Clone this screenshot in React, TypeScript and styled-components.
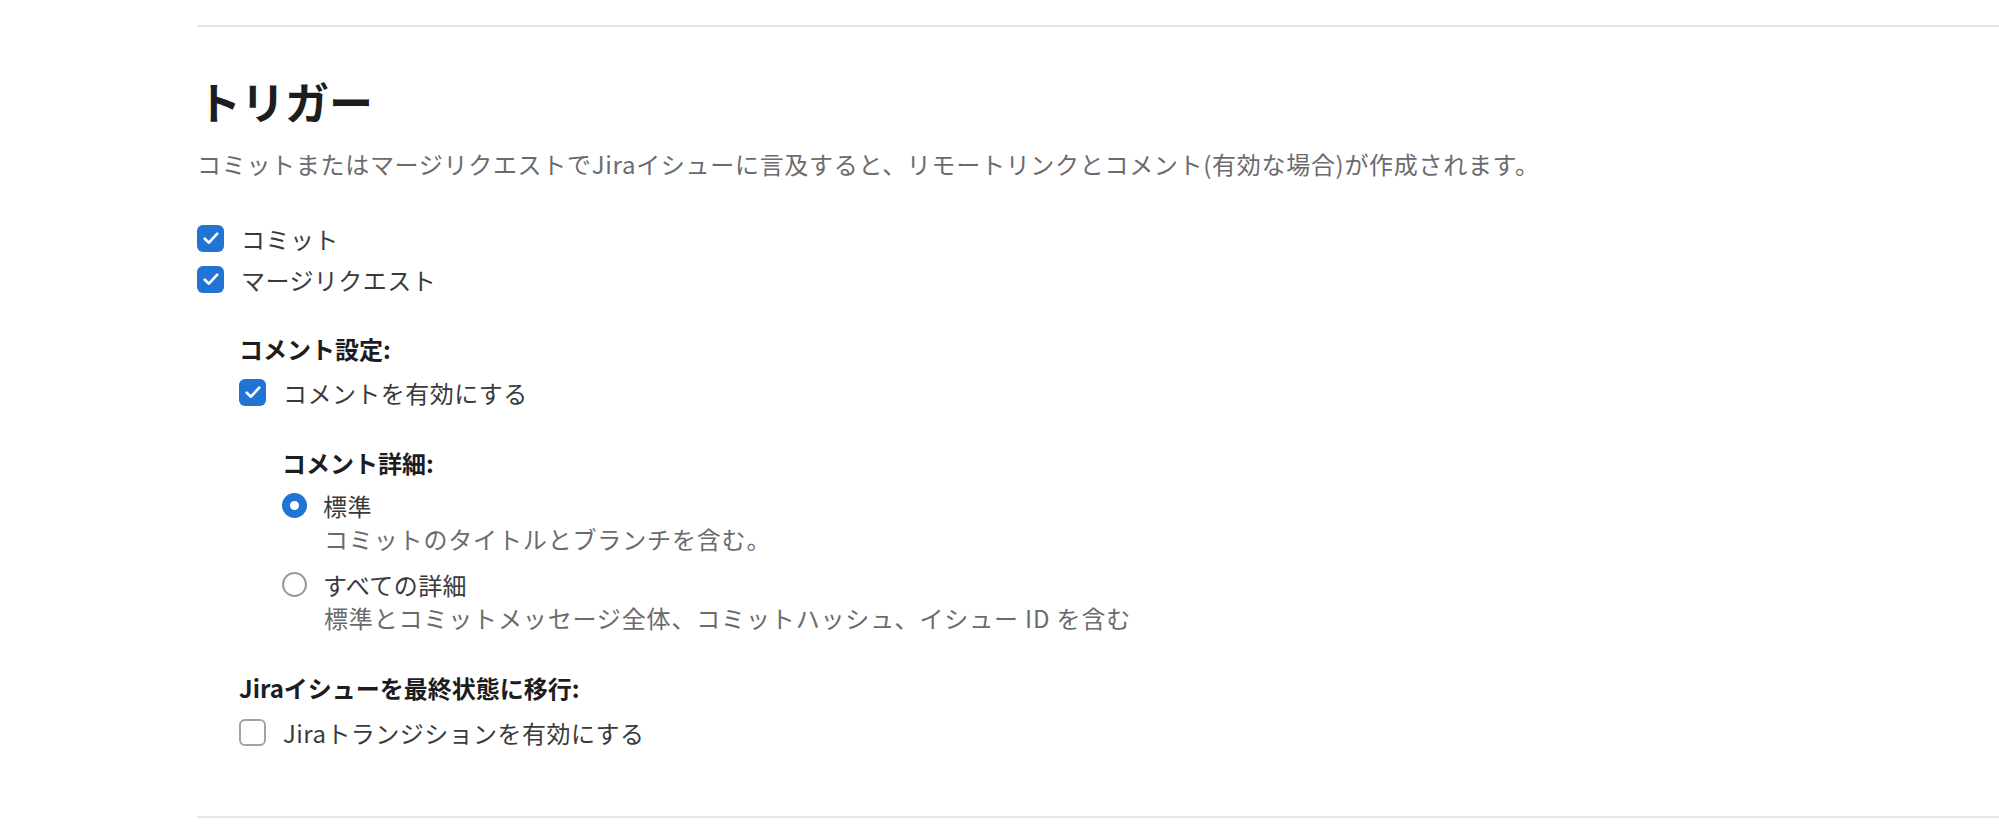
import React from 'react';
import styled, { createGlobalStyle } from 'styled-components';

const Global = createGlobalStyle`
  html, body { margin: 0; padding: 0; background: #ffffff; }
  body {
    font-family: "Noto Sans CJK JP", "Noto Sans", "Liberation Sans", sans-serif;
    -webkit-font-smoothing: antialiased;
  }
`;

const BLUE = '#2174d4';

const Page = styled.div`
  padding: 25px 0 0 197px;
`;

const Section = styled.section`
  display: flex;
  flex-direction: column;
  border-top: 2px solid #e6e6e6;
  border-bottom: 2px solid #e6e6e6;
  padding: 49px 0 67px;
`;

const Title = styled.h2`
  margin: 0;
  font-size: 44px;
  line-height: 50px;
  font-weight: 700;
  color: #1d1d1f;
`;

const Lead = styled.p`
  margin: 21px 0 0;
  font-size: 24px;
  line-height: 34px;
  letter-spacing: 0.7px;
  color: #6b6b6e;
`;

const List = styled.div<{ $top: number }>`
  display: flex;
  flex-direction: column;
  gap: 7px;
  margin-top: ${(p) => p.$top}px;
`;

const Group = styled.div`
  display: flex;
  flex-direction: column;
  margin-left: 42px;
`;

const SubGroup = styled.div`
  display: flex;
  flex-direction: column;
  margin-left: 43px;
`;

const SubTitle = styled.div<{ $top: number }>`
  margin-top: ${(p) => p.$top}px;
  font-size: 24px;
  line-height: 34px;
  font-weight: 700;
  color: #1d1d1f;
`;

const Row = styled.label<{ $top?: number }>`
  display: flex;
  align-items: center;
  gap: 17px;
  height: 34px;
  margin-top: ${(p) => p.$top ?? 0}px;
  font-size: 24px;
  letter-spacing: 0.45px;
  color: #3a3a3c;
  cursor: pointer;
`;

const Box = styled.span<{ $checked: boolean }>`
  flex: none;
  width: 27px;
  height: 27px;
  box-sizing: border-box;
  border-radius: 6px;
  display: flex;
  align-items: center;
  justify-content: center;
  background: ${(p) => (p.$checked ? BLUE : '#ffffff')};
  border: ${(p) => (p.$checked ? 'none' : '2px solid #a3a3a6')};
`;

const Radio = styled.span<{ $checked: boolean }>`
  flex: none;
  width: 25px;
  height: 25px;
  box-sizing: border-box;
  border-radius: 50%;
  display: flex;
  align-items: center;
  justify-content: center;
  background: ${(p) => (p.$checked ? BLUE : '#ffffff')};
  border: ${(p) => (p.$checked ? 'none' : '2px solid #9a9a9d')};
`;

const Dot = styled.span`
  width: 9px;
  height: 9px;
  border-radius: 50%;
  background: #ffffff;
`;

const Option = styled.div<{ $top: number }>`
  display: flex;
  flex-direction: column;
  margin-top: ${(p) => p.$top}px;
`;

const OptionRow = styled(Row)`
  gap: 16px;
`;

const Hint = styled.div`
  padding-left: 42px;
  font-size: 24px;
  line-height: 34px;
  letter-spacing: 0.85px;
  color: #6b6b6e;
`;

const Check = () => (
  <svg width="20" height="20" viewBox="0 0 24 24" fill="none">
    <path d="M4.5 12.8 L9.5 17.6 L19.5 6.8" stroke="#fff" strokeWidth="3.2" strokeLinecap="round" strokeLinejoin="round" />
  </svg>
);

const Checkbox: React.FC<{ checked: boolean; label: string; top?: number }> = ({ checked, label, top }) => (
  <Row $top={top}>
    <Box $checked={checked}>{checked && <Check />}</Box>
    <span>{label}</span>
  </Row>
);

const RadioOption: React.FC<{ checked: boolean; label: string; hint: string; top: number }> = ({ checked, label, hint, top }) => (
  <Option $top={top}>
    <OptionRow>
      <Radio $checked={checked}>{checked && <Dot />}</Radio>
      <span>{label}</span>
    </OptionRow>
    <Hint>{hint}</Hint>
  </Option>
);

export default function App() {
  return (
    <>
      <Global />
      <Page>
        <Section>
          <Title>トリガー</Title>
          <Lead>コミットまたはマージリクエストでJiraイシューに言及すると、リモートリンクとコメント(有効な場合)が作成されます。</Lead>
          <List $top={40}>
            <Checkbox checked label="コミット" />
            <Checkbox checked label="マージリクエスト" />
          </List>
          <Group>
            <SubTitle $top={36}>コメント設定:</SubTitle>
            <Checkbox checked label="コメントを有効にする" top={9} />
            <SubGroup>
              <SubTitle $top={37}>コメント詳細:</SubTitle>
              <RadioOption checked label="標準" hint="コミットのタイトルとブランチを含む。" top={8} />
              <RadioOption
                checked={false}
                label="すべての詳細"
                hint="標準とコミットメッセージ全体、コミットハッシュ、イシュー ID を含む"
                top={11}
              />
            </SubGroup>
            <SubTitle $top={36}>Jiraイシューを最終状態に移行:</SubTitle>
            <Checkbox checked={false} label="Jiraトランジションを有効にする" top={10} />
          </Group>
        </Section>
      </Page>
    </>
  );
}
